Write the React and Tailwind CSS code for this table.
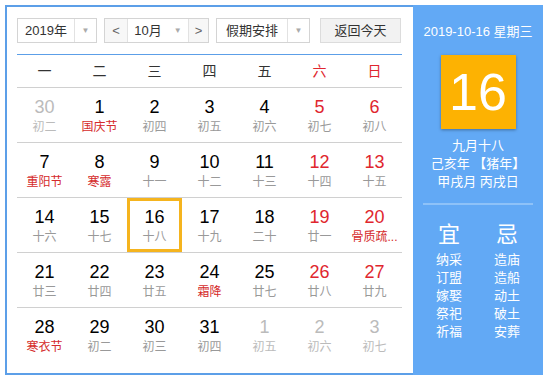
import React from 'react';

const font = { fontFamily: '"Liberation Sans", Arial, "Noto Sans CJK SC", sans-serif' };

const weekdays = ['一', '二', '三', '四', '五', '六', '日'];

// type: o = other month, f = festival (red lunar)
const rows = [
  [['30', '初二', 'o'], ['1', '国庆节', 'f'], ['2', '初四'], ['3', '初五'], ['4', '初六'], ['5', '初七'], ['6', '初八']],
  [['7', '重阳节', 'f'], ['8', '寒露', 'f'], ['9', '十一'], ['10', '十二'], ['11', '十三'], ['12', '十四'], ['13', '十五']],
  [['14', '十六'], ['15', '十七'], ['16', '十八', 't'], ['17', '十九'], ['18', '二十'], ['19', '廿一'], ['20', '骨质疏...', 'f']],
  [['21', '廿三'], ['22', '廿四'], ['23', '廿五'], ['24', '霜降', 'f'], ['25', '廿七'], ['26', '廿八'], ['27', '廿九']],
  [['28', '寒衣节', 'f'], ['29', '初二'], ['30', '初三'], ['31', '初四'], ['1', '初五', 'o'], ['2', '初六', 'o'], ['3', '初七', 'o']],
];

const yi = ['纳采', '订盟', '嫁娶', '祭祀', '祈福'];
const ji = ['造庙', '造船', '动土', '破土', '安葬'];

const Caret = () => <span className="text-[8px] text-[#aaa]">▼</span>;

const Cell = ({ day, lunar, type, col }) => {
  const other = type === 'o';
  const weekend = col >= 5;
  const numColor = other ? 'text-[#bbb]' : weekend ? 'text-[#e0262e]' : 'text-black';
  const lunarColor = other ? 'text-[#bbb]' : type === 'f' ? 'text-[#d52b2b]' : 'text-[#999]';
  return (
    <div
      className={
        'flex flex-col items-center h-full ' +
        (type === 't' ? 'border-[3px] border-[#f5b41e] pt-[6px]' : 'pt-[9px]')
      }
    >
      <div className={'text-[18px] leading-[20px] ' + numColor}>{day}</div>
      <div className={'text-[12px] leading-[16px] mt-[2px] whitespace-nowrap ' + lunarColor}>{lunar}</div>
    </div>
  );
};

export default function App() {
  return (
    <div className="bg-white w-[547px] h-[381px] pt-[5px] pl-[5px]" style={font}>
      <div className="flex w-[538px] h-[370px]">
        {/* calendar */}
        <div className="w-[408px] h-full border-2 border-r-0 border-[#5c9fe8] pt-[11px] pl-[10px] pr-[9px]">
          <div className="flex items-center h-[25px] text-[13px] text-[#333]">
            <div className="flex w-[80px] h-full border border-[#d4d4d4]">
              <div className="w-[56px] flex items-center justify-center">2019年</div>
              <div className="flex-1 flex items-center justify-center border-l border-[#e2e2e2]"><Caret /></div>
            </div>
            <div className="flex w-[105px] h-full ml-[7px] border border-[#d4d4d4]">
              <div className="w-[23px] flex items-center justify-center bg-[#f7f7f7] border-r border-[#e2e2e2] text-[#666]">&lt;</div>
              <div className="w-[60px] flex items-center justify-center gap-[12px]">10月 <Caret /></div>
              <div className="flex-1 flex items-center justify-center bg-[#f7f7f7] border-l border-[#e2e2e2] text-[#666]">&gt;</div>
            </div>
            <div className="flex w-[94px] h-full ml-[7px] border border-[#d4d4d4]">
              <div className="w-[70px] flex items-center justify-center">假期安排</div>
              <div className="flex-1 flex items-center justify-center border-l border-[#e2e2e2]"><Caret /></div>
            </div>
            <div className="w-[81px] h-full ml-[10px] border border-[#dcdcdc] bg-[#f2f2f2] flex items-center justify-center">返回今天</div>
          </div>
          <div className="mt-[11px] w-[385px] h-px bg-[#5c9fe8]" />
          <div className="grid grid-cols-7 w-[385px] h-[33px] border-b border-[#d0d0d0] text-[14px] items-center">
            {weekdays.map((w, i) => (
              <div key={w} className={'text-center ' + (i >= 5 ? 'text-[#e0262e]' : 'text-[#333]')}>{w}</div>
            ))}
          </div>
          {rows.map((r, ri) => (
            <div
              key={ri}
              className={'grid grid-cols-7 w-[385px] h-[55px] ' + (ri < rows.length - 1 ? 'border-b border-[#d0d0d0]' : '')}
            >
              {r.map(([d, l, t], ci) => (
                <Cell key={ci} day={d} lunar={l} type={t} col={ci} />
              ))}
            </div>
          ))}
        </div>
        {/* side panel */}
        <div className="w-[130px] h-full bg-[#62a9f5] text-white flex flex-col items-center">
          <div className="mt-[19px] text-[13px] leading-[16px]">2019-10-16 星期三</div>
          <div className="mt-[15px] w-[75px] h-[74px] bg-[#fdb202] shadow-[0_1px_3px_rgba(0,0,0,0.35)] flex items-center justify-center text-[52px] leading-none">
            16
          </div>
          <div className="mt-[8px] text-[13px] leading-[18px] text-center">
            <div>九月十八</div>
            <div>己亥年 【猪年】</div>
            <div>甲戌月 丙戌日</div>
          </div>
          <div className="mt-[12px] w-[110px] h-[2px] bg-[#8ec2f8]" />
          <div className="mt-[18px] flex gap-[32px]">
            <div className="flex flex-col items-center w-[26px]">
              <div className="text-[22px] leading-[24px]">宜</div>
              <div className="mt-[4px] text-[13px] leading-[18px] text-center">
                {yi.map((x) => <div key={x}>{x}</div>)}
              </div>
            </div>
            <div className="flex flex-col items-center w-[26px]">
              <div className="text-[22px] leading-[24px]">忌</div>
              <div className="mt-[4px] text-[13px] leading-[18px] text-center">
                {ji.map((x) => <div key={x}>{x}</div>)}
              </div>
            </div>
          </div>
        </div>
      </div>
    </div>
  );
}
